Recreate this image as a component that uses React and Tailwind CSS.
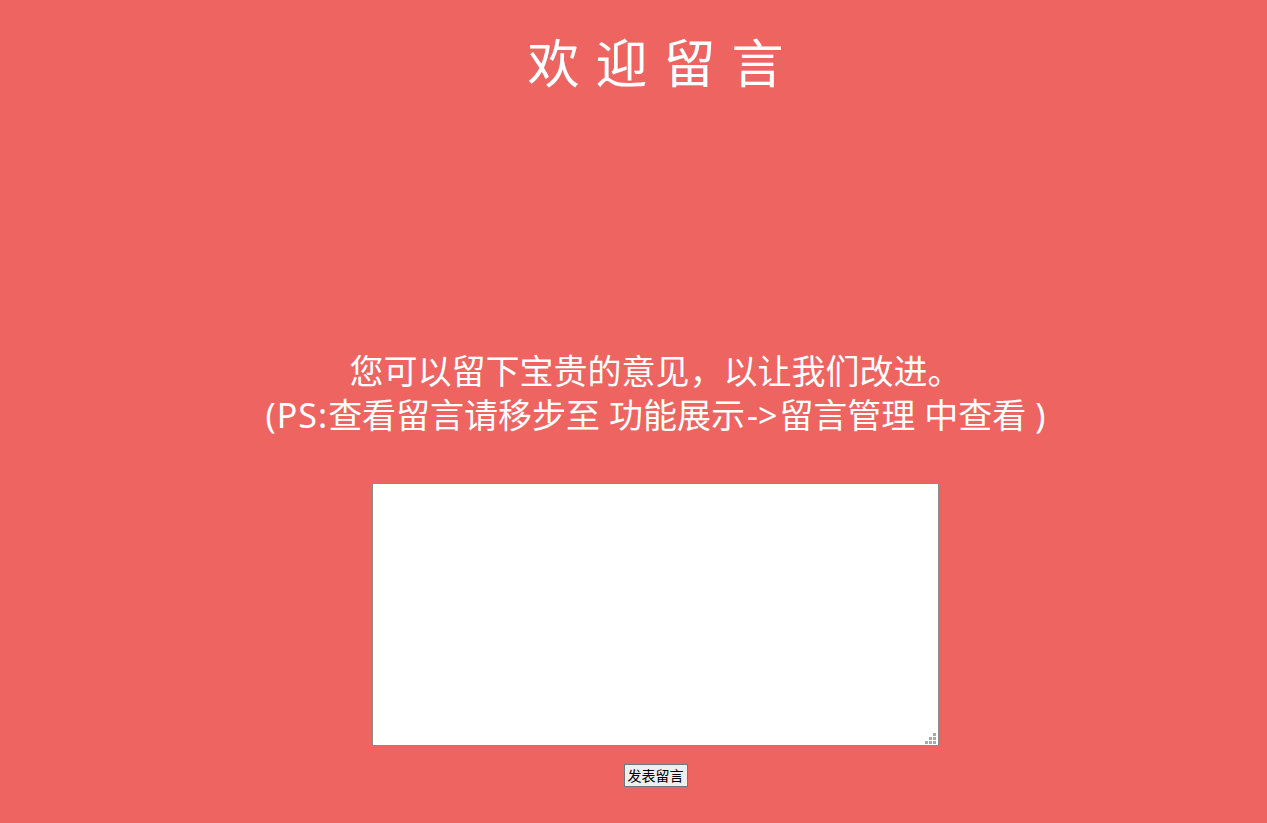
import React from 'react';

const App = () => {
  const title = ['欢', '迎', '留', '言'];

  return (
    <div
      className="min-h-[823px] w-full bg-[#ee6461] pl-[44px] text-white"
      style={{ fontFamily: '"Noto Sans", "Noto Sans CJK SC", sans-serif' }}
    >
      {/* title */}
      <div className="flex justify-center gap-[16px] pt-[36px] text-[52px] leading-[54px]">
        {title.map((ch) => (
          <span key={ch}>{ch}</span>
        ))}
      </div>

      {/* notice */}
      <div className="mt-[258px] text-center text-[34px] leading-[46px]">
        <p>您可以留下宝贵的意见，以让我们改进。</p>
        <p className="-mt-[2px]">
          <span className="tracking-[1px]">(PS:</span>查看留言请移步至 功能展示<span className="mx-[2px]">-&gt;</span>留言管理 中查看<span className="ml-[9px]">)</span>
        </p>
      </div>

      {/* form */}
      <div className="mt-[45px] flex flex-col items-center">
        <div className="relative">
          <textarea className="block h-[263px] w-[567px] resize-none border border-[#8a8a8a] bg-white text-black" />
          {/* resize grip */}
          <div className="pointer-events-none absolute bottom-[2px] right-[3px] grid grid-cols-3 gap-[1px]">
            <span className="h-[3px] w-[3px]" />
            <span className="h-[3px] w-[3px]" />
            <span className="h-[3px] w-[3px] bg-[#a9a9a9]" />
            <span className="h-[3px] w-[3px]" />
            <span className="h-[3px] w-[3px] bg-[#a9a9a9]" />
            <span className="h-[3px] w-[3px] bg-[#a9a9a9]" />
            <span className="h-[3px] w-[3px] bg-[#a9a9a9]" />
            <span className="h-[3px] w-[3px] bg-[#a9a9a9]" />
            <span className="h-[3px] w-[3px] bg-[#a9a9a9]" />
          </div>
        </div>
        <button
          type="button"
          className="mt-[18px] h-[23px] border border-[#767676] bg-[#efefef] px-[3px] text-[14px] leading-[19px] text-black"
        >
          发表留言
        </button>
      </div>
    </div>
  );
};

export default App;
